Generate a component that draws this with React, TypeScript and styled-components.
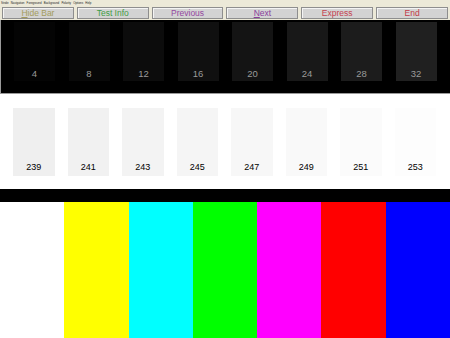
import React from "react";
import styled, { createGlobalStyle } from "styled-components";

const Global = createGlobalStyle`
  html, body { margin: 0; padding: 0; background: #fff; }
  body { width: 450px; height: 338px; overflow: hidden; font-family: "Liberation Sans", Arial, sans-serif; }
`;

const Page = styled.div`
  width: 450px;
  height: 338px;
  display: flex;
  flex-direction: column;
  overflow: hidden;
`;

const Chrome = styled.div`
  background: #ece9d8;
  height: 20px;
  display: flex;
  flex-direction: column;
`;

const MenuBar = styled.div`
  height: 6px;
  display: flex;
  align-items: center;
  gap: 2.2px;
  padding-left: 1px;
  font-size: 2.9px;
  line-height: 4px;
  color: #222;
`;

const MenuItem = styled.span`
  white-space: nowrap;
`;

const Toolbar = styled.div`
  height: 12px;
  margin-top: 1px;
  padding: 0 2px;
  display: flex;
  gap: 3px;
`;

const Btn = styled.div<{ $color: string }>`
  flex: 1;
  box-sizing: border-box;
  border: 1px solid #8e8e8e;
  box-shadow: inset 1px 1px 0 #f4f4f4;
  background: #d3d3d3;
  color: ${(p) => p.$color};
  font-size: 8.5px;
  line-height: 10px;
  display: flex;
  align-items: center;
  justify-content: center;
  white-space: nowrap;
`;

const U = styled.span`
  text-decoration: underline;
  text-decoration-thickness: 0.5px;
  text-underline-offset: 1px;
`;

const DarkPanel = styled.div`
  height: 74px;
  box-sizing: border-box;
  background: #000;
  border-left: 1px solid #9a9a9a;
  border-bottom: 1px solid #9a9a9a;
  padding: 2px 0 0 13px;
  display: grid;
  grid-template-columns: repeat(8, 41px);
  column-gap: 13.5px;
  align-content: start;
`;

const LightPanel = styled.div`
  height: 95px;
  box-sizing: border-box;
  background: #fff;
  padding: 14px 0 0 13px;
  display: grid;
  grid-template-columns: repeat(8, 41.5px);
  column-gap: 13px;
  align-content: start;
`;

const Patch = styled.div<{ $h: number; $text: string; $fs: number; $pb: number }>`
  height: ${(p) => p.$h}px;
  color: ${(p) => p.$text};
  font-size: ${(p) => p.$fs}px;
  line-height: ${(p) => p.$fs}px;
  box-sizing: border-box;
  padding-bottom: ${(p) => p.$pb}px;
  display: flex;
  align-items: flex-end;
  justify-content: center;
`;

const BlackBar = styled.div`
  height: 13px;
  background: #000;
`;

const Bars = styled.div`
  flex: 1;
  display: flex;
`;

const Bar = styled.div<{ $c: string }>`
  flex: 1;
  background: ${(p) => p.$c};
`;

const menus = ["Stride", "Navigation", "Foreground", "Background", "Polarity", "Options", "Help"];
const dark = [4, 8, 12, 16, 20, 24, 28, 32];
const light = [239, 241, 243, 245, 247, 249, 251, 253];
const colors = ["#ffffff", "#ffff00", "#00ffff", "#00ff00", "#ff00ff", "#ff0000", "#0000ff"];

export default function App() {
  return (
    <Page>
      <Global />
      <Chrome>
        <MenuBar>
          {menus.map((m) => (
            <MenuItem key={m}>{m}</MenuItem>
          ))}
        </MenuBar>
        <Toolbar>
          <Btn $color="#a39c5c"><span><U>H</U>ide Bar</span></Btn>
          <Btn $color="#3f9c45">Test Info</Btn>
          <Btn $color="#9448a0">Previous</Btn>
          <Btn $color="#8a3f9c"><span><U>N</U>ext</span></Btn>
          <Btn $color="#c4424e">Express</Btn>
          <Btn $color="#c23a46">End</Btn>
        </Toolbar>
      </Chrome>
      <DarkPanel>
        {dark.map((v) => (
          <Patch
            key={v}
            $h={59}
            $fs={9.5}
            $pb={3}
            $text="#9a9a9a"
            style={{ background: `rgb(${v},${v},${v})` }}
          >
            {v}
          </Patch>
        ))}
      </DarkPanel>
      <LightPanel>
        {light.map((v) => (
          <Patch
            key={v}
            $h={68}
            $fs={9}
            $pb={4.5}
            $text="#000"
            style={{ background: `rgb(${v},${v},${v})` }}
          >
            {v}
          </Patch>
        ))}
      </LightPanel>
      <BlackBar />
      <Bars>
        {colors.map((c) => (
          <Bar key={c} $c={c} />
        ))}
      </Bars>
    </Page>
  );
}
